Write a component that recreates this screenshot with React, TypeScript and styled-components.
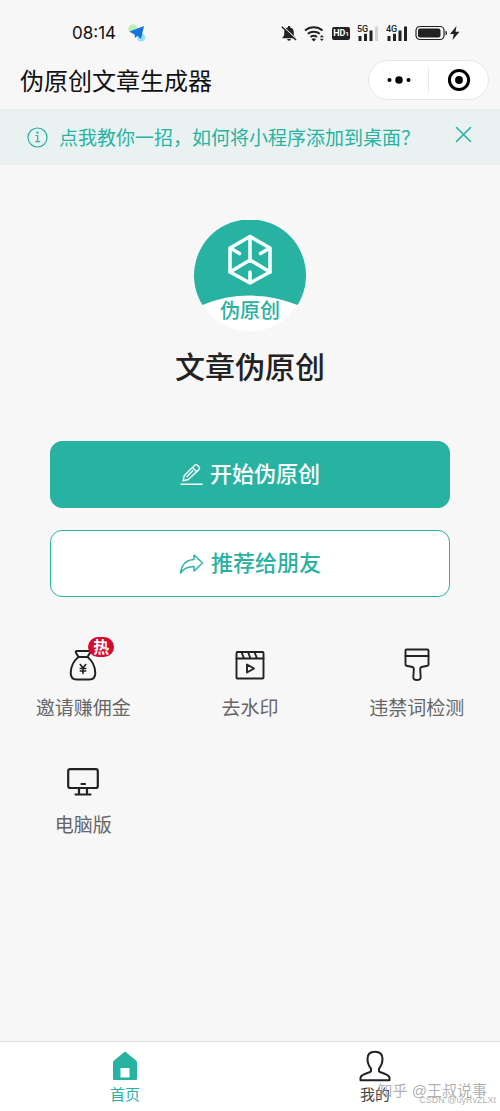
import React from "react";
import styled, { createGlobalStyle } from "styled-components";

const teal = "#28b2a2";

const GlobalStyle = createGlobalStyle`
  * { box-sizing: border-box; }
  body {
    margin: 0;
    background: #f7f7f7;
    color: #222;
    font-family: "Noto Sans CJK SC", sans-serif;
  }
  button { font-family: inherit; padding: 0; border: 0; background: none; cursor: pointer; }
  svg { display: block; flex: none; }
`;

const Page = styled.div`
  min-height: 100vh;
  display: flex;
  flex-direction: column;
`;

const StatusBar = styled.div`
  height: 54px;
  padding: 12px 40px 0 72px;
  display: flex;
  align-items: center;
  justify-content: space-between;
`;

const StatusGroup = styled.div<{ $gap: number }>`
  display: flex;
  align-items: center;
  gap: ${(p) => p.$gap}px;
`;

const Time = styled.span`
  font: 400 17px/24px Inter, sans-serif;
  color: #111;
`;

const TitleBar = styled.header`
  height: 55px;
  padding: 0 11px 4px 20px;
  display: flex;
  align-items: center;
  justify-content: space-between;
`;

const AppName = styled.h1`
  margin: 0;
  font-size: 24px;
  line-height: 32px;
  font-weight: 400;
  color: #111;
`;

const Capsule = styled.div`
  width: 121px;
  height: 40px;
  display: flex;
  align-items: center;
  border: 1px solid #e6e6e6;
  border-radius: 20px;
  background: #fff;
`;

const CapsuleButton = styled.button`
  flex: 1;
  height: 24px;
  display: flex;
  align-items: center;
  justify-content: center;
  & + & { border-left: 1px solid #e8e8e8; }
`;

const Notice = styled.div`
  height: 56px;
  padding: 0 28px 0 27px;
  display: flex;
  align-items: center;
  background: #e9f2f1;
  color: ${teal};
`;

const NoticeLink = styled.a`
  flex: 1;
  display: flex;
  align-items: center;
  gap: 11px;
  color: inherit;
  text-decoration: none;
  font-size: 19px;
  line-height: 28px;
  white-space: nowrap;
`;

const CloseButton = styled.button`
  && { padding-bottom: 6px; }
  color: ${teal};
`;

const Main = styled.main`
  flex: 1;
  display: flex;
  flex-direction: column;
  padding-top: 55px;
`;

const Brand = styled.section`
  display: flex;
  flex-direction: column;
  align-items: center;
  gap: 11px;
`;

const BrandName = styled.h2`
  margin: 0;
  font-size: 30px;
  line-height: 44px;
  font-weight: 500;
`;

const Actions = styled.div`
  display: flex;
  flex-direction: column;
  gap: 22px;
  padding: 54px 50px 0;
`;

const ActionButton = styled.button<{ $outline?: boolean }>`
  && {
    height: 67px;
    display: flex;
    align-items: center;
    justify-content: center;
    gap: 7px;
    border: 1px solid ${teal};
    border-radius: 12px;
    background: ${(p) => (p.$outline ? "#fff" : teal)};
    color: ${(p) => (p.$outline ? teal : "#fff")};
    font-size: 22px;
    line-height: 32px;
    font-weight: 500;
  }
`;

const ActionLabel = styled.span`
  padding-bottom: 6px;
`;

const Tools = styled.nav`
  display: grid;
  grid-template-columns: repeat(3, 1fr);
  row-gap: 42px;
  padding-top: 49px;
`;

const ToolLink = styled.a`
  display: flex;
  flex-direction: column;
  align-items: center;
  gap: 9px;
  color: #666;
  text-decoration: none;
  font-size: 19px;
  line-height: 28px;
`;

const ToolIcon = styled.span`
  position: relative;
  height: 38px;
  display: flex;
  align-items: center;
  color: #222;
`;

const HotBadge = styled.span`
  position: absolute;
  left: 19px;
  top: -9px;
  width: 26px;
  height: 20px;
  border-radius: 10px;
  background: #d8092f;
  color: #fff;
  font-size: 16px;
  line-height: 18px;
  font-weight: 700;
  text-align: center;
`;

const TabBar = styled.nav`
  position: relative;
  height: 70px;
  display: flex;
  border-top: 1px solid #ddd;
  background: #fff;
`;

const Tab = styled.a<{ $active?: boolean }>`
  flex: 1;
  display: flex;
  flex-direction: column;
  align-items: center;
  gap: 1px;
  padding-top: 8px;
  color: ${(p) => (p.$active ? teal : "#444")};
  text-decoration: none;
  font-size: 15px;
  line-height: 22px;
`;

const Watermark = styled.span<{ $size: number; $right: number; $bottom: number }>`
  position: absolute;
  right: ${(p) => p.$right}px;
  bottom: ${(p) => p.$bottom}px;
  font-size: ${(p) => p.$size}px;
  line-height: ${(p) => p.$size + 6}px;
  font-family: "Liberation Sans", "Noto Sans CJK SC", sans-serif;
  color: rgba(150, 150, 150, 0.75);
  white-space: nowrap;
  pointer-events: none;
`;

const stroke = {
  fill: "none",
  stroke: "currentColor",
  strokeLinecap: "round" as const,
  strokeLinejoin: "round" as const,
};

const PlaneLogo = () => (
  <svg width="18" height="18" viewBox="0 0 18 18">
    <circle cx="5" cy="5" r="4.6" fill="#b9efb0" />
    <circle cx="13" cy="13.5" r="4" fill="#8fe3f7" />
    <path d="M1.500 7.500 16 2 13 15 9.500 11.800 7 14 6.500 10.500Z" fill="#1473e0" />
  </svg>
);

const MutedBell = () => (
  <svg width="16" height="17" viewBox="0 0 16 17" fill="#222">
    <path d="M7 2.200V1h2v1.200c2.500.5 3.800 2.400 3.800 5v3l1.700 2.300v.7h-13v-.7l1.700-2.300v-3c0-2.600 1.300-4.500 3.800-5Z" />
    <path d="M6.200 14h3.600a1.800 1.800 0 0 1-3.600 0Z" />
    <path d="M2 1.700 16 14.700" stroke="#f7f7f7" strokeWidth="1.500" />
    <path d="M.8 1.800 15 15" stroke="#222" strokeWidth="1.500" />
  </svg>
);

const Wifi = () => (
  <svg width="21" height="17" viewBox="0 0 21 17">
    <g fill="none" stroke="#222" strokeWidth="2">
      <path d="M1 5.500a13.500 13.500 0 0 1 17.500 0" />
      <path d="M3.800 8.800a9.500 9.500 0 0 1 12 0" />
      <path d="M6.500 12a5.500 5.500 0 0 1 6.500 0" />
    </g>
    <path d="M7.500 14.200a3.500 3.500 0 0 1 4.500 0L9.800 16.500Z" fill="#222" />
    <path d="M15.800 12.300l2-2.300 2 2.300ZM15.800 13.800l2 2.300 2-2.300Z" fill="#222" />
  </svg>
);

const HdBadge = styled.span`
  width: 18px;
  height: 13px;
  border-radius: 2px;
  background: #222;
  color: #fff;
  font: 700 9px/13px Roboto, sans-serif;
  text-align: center;
  small { font-size: 6px; }
`;

const Signal = ({ label, weak }: { label: string; weak?: boolean }) => (
  <svg width="22" height="17" viewBox="0 0 22 17" fill="#222">
    <text x="0" y="7" fontSize="9" fontWeight="500" fontFamily="Roboto, sans-serif">{label}</text>
    <rect x="1.500" y="11" width="3" height="5" />
    <rect x="7" y="8.800" width="3" height="7.200" />
    <rect x="12.500" y="5.500" width="3" height="10.500" />
    <rect x="18" y="1.500" width="3" height="14.500" fill={weak ? "#d4d4d4" : "#222"} />
  </svg>
);

const Battery = () => (
  <svg width="45" height="16" viewBox="0 0 45 16">
    <rect x="1" y="1.500" width="28" height="13" rx="4" fill="none" stroke="#222" strokeWidth="1.200" />
    <rect x="3" y="3.500" width="22.500" height="9" rx="2" fill="#222" />
    <path d="M30.500 5.500q1.500.5 1.500 2.500t-1.500 2.500Z" fill="#222" />
    <path d="M41.500 1 35 9h3.800L37.500 15l7-8.300h-4Z" fill="#222" />
  </svg>
);

const MoreDots = () => (
  <svg width="24" height="8" viewBox="0 0 24 8" fill="#000">
    <circle cx="2.500" cy="4" r="2" />
    <circle cx="12" cy="4" r="3.800" />
    <circle cx="21.500" cy="4" r="2" />
  </svg>
);

const Target = () => (
  <svg width="24" height="24" viewBox="0 0 24 24">
    <circle cx="12" cy="12" r="9.600" fill="none" stroke="#000" strokeWidth="3" />
    <circle cx="12" cy="12" r="3.900" fill="#000" />
  </svg>
);

const Info = () => (
  <svg width="21" height="21" viewBox="0 0 21 21" {...stroke} strokeWidth="1.200">
    <circle cx="10.500" cy="10.500" r="9.500" />
    <path d="M9 8.500h1.700v6M8.700 14.700h4" />
    <circle cx="10.500" cy="5.600" r=".6" fill="currentColor" />
  </svg>
);

const Cross = () => (
  <svg width="17" height="17" viewBox="0 0 17 17" {...stroke} strokeWidth="1.600">
    <path d="M1.500 1.500l14 14M15.500 1.500l-14 14" />
  </svg>
);

const Logo = () => (
  <svg width="112" height="112" viewBox="0 0 112 112" role="img" aria-label="伪原创">
    <circle cx="56" cy="56" r="55.500" fill="#fff" />
    <path d="M8.500 85A56 56 0 1 1 103.500 85A125 125 0 0 0 8.500 85Z" fill={teal} />
    <g fill="none" stroke="#f4fffd" strokeWidth="3.600" strokeLinejoin="round" strokeLinecap="round">
      <path d="M56 16.500 76 28v24L56 63 36 52V28Z" />
      <path d="M56 16.500V40L36 52M56 40l20 12M37 28.500l8.500 5M75 28.500l-8.500 5M56 62V52" />
    </g>
    <text x="56" y="98" textAnchor="middle" fontSize="20" fontWeight="500" fill={teal}>伪原创</text>
  </svg>
);

const Pencil = () => (
  <svg width="23" height="23" viewBox="0 0 23 23" {...stroke} strokeWidth="1.400">
    <path d="M1 21.300h21" />
    <path d="M3 17.800l1.300-5.300L14.800 2.300q1.300-1.300 2.600 0l1.600 1.600q1.200 1.300 0 2.600L8.300 16.500Z" />
    <path d="M12.500 4.500l4.200 4.200M6.800 13.800l6-6" />
  </svg>
);

const Share = () => (
  <svg width="25" height="22" viewBox="0 0 25 22" {...stroke} strokeWidth="1.400">
    <path d="M15 2l8.500 8L15 18v-4.500C8.500 13.500 5 15 1.500 20 2.500 12 7 7 15 6.500Z" />
  </svg>
);

const MoneyBag = () => (
  <svg width="28" height="34" viewBox="0 0 28 34" {...stroke} strokeWidth="2">
    <path d="M9.500 9 6.800 4.500Q6.500 3 8 3h12q1.500 0 1.200 1.500L18.500 9" />
    <path d="M9.500 9h9C23 12.500 26.300 19 26.300 25c0 4.500-2 6.500-6 6.500H7.700c-4 0-6-2-6-6.500C1.700 19 5 12.500 9.500 9Z" />
    <path d="M11.300 16.500l2.700 3.500 2.700-3.500M14 20v5.500M11.300 20.500h5.400M11.300 23h5.400" strokeWidth="1.600" />
  </svg>
);

const Clapper = () => (
  <svg width="30" height="30" viewBox="0 0 30 30" {...stroke} strokeWidth="1.900">
    <rect x="1.500" y="2" width="27" height="26.500" rx="1" />
    <path d="M1.500 8.500h27M6.500 2l2.500 6.500M13 2l2.500 6.500M19.500 2 22 8.500" />
    <path d="M12 14.500v8l7-4Z" />
  </svg>
);

const Brush = () => (
  <svg width="26" height="34" viewBox="0 0 26 34" {...stroke} strokeWidth="1.900">
    <path d="M2.500 1.500h21q1 0 1 1v14q0 1-1 1.200l-6 1.300q-1.500.5-1.300 2.500l.5 7.500c0 4-7.400 4-7.400 0l.5-7.500q.2-2-1.300-2.500l-6-1.300q-1-.2-1-1.200v-14q0-1 1-1Z" />
    <path d="M1.500 8h23" />
  </svg>
);

const Monitor = () => (
  <svg width="32" height="28" viewBox="0 0 32 28" {...stroke} strokeWidth="2.200">
    <rect x="1.200" y="1.200" width="29.600" height="18.800" rx="2" />
    <path d="M12 20.500v5.500M20 20.500v5.500M8.500 26.500h15M14.500 16h3.500" />
  </svg>
);

const House = () => (
  <svg width="26" height="32" viewBox="0 0 26 32">
    <path d="M13 1.500 24 10.500q1 .8 1 2V29q0 1-1 1H2q-1 0-1-1V12.500q0-1.200 1-2Z" fill={teal} />
    <rect x="8.500" y="18" width="9" height="9.500" fill="#fff" />
  </svg>
);

const Person = () => (
  <svg width="32" height="32" viewBox="0 0 32 32" {...stroke} stroke="#222" strokeWidth="2">
    <path d="M16 1.700c5 0 7.500 2.500 7.500 7 0 5-1.500 7.500-3.500 10v2.500c1 2 9.500 2 10.500 6.500v2.500h-29V27.700C2.500 23.200 11 23.200 12 21.200v-2.500c-2-2.500-3.500-5-3.500-10 0-4.500 2.500-7 7.500-7Z" />
  </svg>
);

const tools = [
  { label: "邀请赚佣金", Icon: MoneyBag, hot: true },
  { label: "去水印", Icon: Clapper },
  { label: "违禁词检测", Icon: Brush },
  { label: "电脑版", Icon: Monitor },
];

export default function App() {
  return (
    <Page>
      <GlobalStyle />
      <StatusBar>
        <StatusGroup $gap={12}>
          <Time>08:14</Time>
          <PlaneLogo />
        </StatusGroup>
        <StatusGroup $gap={7}>
          <MutedBell />
          <Wifi />
          <HdBadge>HD<small>1</small></HdBadge>
          <Signal label="5G" weak />
          <Signal label="4G" />
          <Battery />
        </StatusGroup>
      </StatusBar>
      <TitleBar>
        <AppName>伪原创文章生成器</AppName>
        <Capsule>
          <CapsuleButton aria-label="更多"><MoreDots /></CapsuleButton>
          <CapsuleButton aria-label="关闭小程序"><Target /></CapsuleButton>
        </Capsule>
      </TitleBar>
      <Notice>
        <NoticeLink href="#guide"><Info />点我教你一招，如何将小程序添加到桌面？</NoticeLink>
        <CloseButton aria-label="关闭"><Cross /></CloseButton>
      </Notice>
      <Main>
        <Brand>
          <Logo />
          <BrandName>文章伪原创</BrandName>
        </Brand>
        <Actions>
          <ActionButton><Pencil /><ActionLabel>开始伪原创</ActionLabel></ActionButton>
          <ActionButton $outline><Share /><ActionLabel>推荐给朋友</ActionLabel></ActionButton>
        </Actions>
        <Tools>
          {tools.map(({ label, Icon, hot }) => (
            <ToolLink key={label} href="#tool">
              <ToolIcon><Icon />{hot && <HotBadge>热</HotBadge>}</ToolIcon>
              {label}
            </ToolLink>
          ))}
        </Tools>
      </Main>
      <TabBar>
        <Tab href="#home" $active><House />首页</Tab>
        <Tab href="#me"><Person />我的</Tab>
        <Watermark $size={15} $right={13} $bottom={10}>知乎 @王叔说事</Watermark>
        <Watermark $size={9} $right={4} $bottom={3}>CSDN @uyRvZLXt</Watermark>
      </TabBar>
    </Page>
  );
}
